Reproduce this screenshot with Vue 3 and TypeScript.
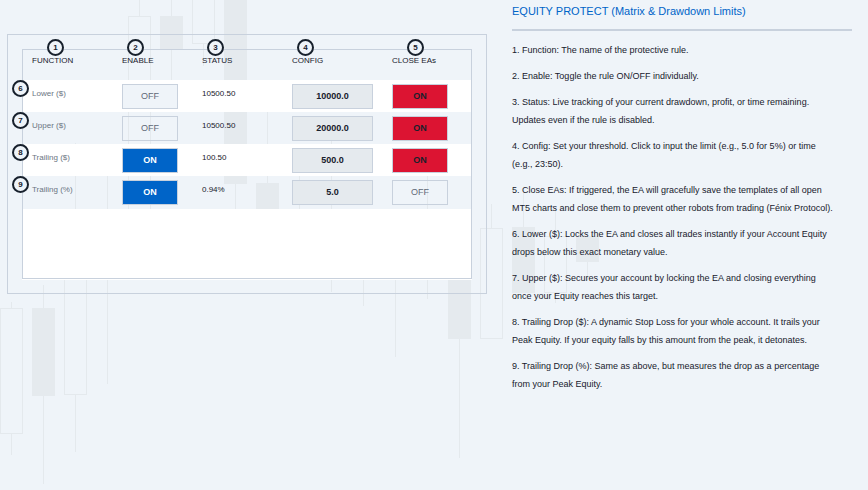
<script setup lang="ts">
import { reactive } from 'vue'

interface Column {
  label: string
  markerInset: 'near' | 'far'
}

interface Rule {
  marker: number
  name: string
  enabled: boolean
  status: string
  config: string
  closeEas: boolean
}

interface Candle {
  x: number
  high: number
  top: number
  bottom: number
  low: number
  filled?: boolean
}

const columns: Column[] = [
  { label: 'FUNCTION', markerInset: 'far' },
  { label: 'ENABLE', markerInset: 'near' },
  { label: 'STATUS', markerInset: 'near' },
  { label: 'CONFIG', markerInset: 'near' },
  { label: 'CLOSE EAs', markerInset: 'far' },
]

const rules = reactive<Rule[]>([
  { marker: 6, name: 'Lower ($)', enabled: false, status: '10500.50', config: '10000.0', closeEas: true },
  { marker: 7, name: 'Upper ($)', enabled: false, status: '10500.50', config: '20000.0', closeEas: true },
  { marker: 8, name: 'Trailing ($)', enabled: true, status: '100.50', config: '500.0', closeEas: true },
  { marker: 9, name: 'Trailing (%)', enabled: true, status: '0.94%', config: '5.0', closeEas: false },
])

const notes = [
  '1. Function: The name of the protective rule.',
  '2. Enable: Toggle the rule ON/OFF individually.',
  '3. Status: Live tracking of your current drawdown, profit, or time remaining. Updates even if the rule is disabled.',
  '4. Config: Set your threshold. Click to input the limit (e.g., 5.0 for 5%) or time (e.g., 23:50).',
  '5. Close EAs: If triggered, the EA will gracefully save the templates of all open MT5 charts and close them to prevent other robots from trading (Fénix Protocol).',
  '6. Lower ($): Locks the EA and closes all trades instantly if your Account Equity drops below this exact monetary value.',
  '7. Upper ($): Secures your account by locking the EA and closing everything once your Equity reaches this target.',
  '8. Trailing Drop ($): A dynamic Stop Loss for your whole account. It trails your Peak Equity. If your equity falls by this amount from the peak, it detonates.',
  '9. Trailing Drop (%): Same as above, but measures the drop as a percentage from your Peak Equity.',
]

const candles: Candle[] = [
  { x: 0, high: 302, top: 308, bottom: 434, low: 455 },
  { x: 32, high: 285, top: 308, bottom: 396, low: 484, filled: true },
  { x: 64, high: 143, top: 215, bottom: 395, low: 452 },
  { x: 96, high: 176, top: 210, bottom: 270, low: 384 },
  { x: 128, high: 0, top: 16, bottom: 240, low: 250 },
  { x: 160, high: 0, top: 16, bottom: 49, low: 85, filled: true },
  { x: 192, high: -10, top: -5, bottom: 44, low: 66 },
  { x: 224, high: -10, top: -5, bottom: 184, low: 240, filled: true },
  { x: 256, high: 112, top: 183, bottom: 240, low: 260, filled: true },
  { x: 288, high: 176, top: 210, bottom: 250, low: 252 },
  { x: 320, high: 116, top: 220, bottom: 260, low: 292 },
  { x: 352, high: 215, top: 220, bottom: 260, low: 306 },
  { x: 384, high: 215, top: 220, bottom: 260, low: 357 },
  { x: 416, high: 170, top: 215, bottom: 260, low: 299 },
  { x: 448, high: 215, top: 220, bottom: 339, low: 458, filled: true },
  { x: 480, high: 204, top: 228, bottom: 339, low: 339 },
  { x: 512, high: 190, top: 227, bottom: 293, low: 293, filled: true },
  { x: 544, high: 208, top: 236, bottom: 293, low: 303 },
  { x: 576, high: 236, top: 236, bottom: 262, low: 280, filled: true },
]
</script>

<template>
  <main class="page">
    <svg class="candles" aria-hidden="true">
      <g v-for="c in candles" :key="c.x">
        <path :d="`M${c.x + 11.5} ${c.high}V${c.top}M${c.x + 11.5} ${c.bottom}V${c.low}`" class="line" />
        <rect v-if="c.filled" :x="c.x" :y="c.top" width="23" :height="c.bottom - c.top" class="solid" />
        <rect v-else :x="c.x + 0.5" :y="c.top + 0.5" width="22" :height="c.bottom - c.top - 1" class="line" />
      </g>
    </svg>

    <section class="panel">
      <div class="matrix">
        <table>
          <colgroup>
            <col class="c-function" />
            <col class="c-enable" />
            <col class="c-status" />
            <col class="c-config" />
            <col />
          </colgroup>
          <thead>
            <tr>
              <th v-for="(col, i) in columns" :key="col.label" scope="col">
                <span class="marker head" :class="col.markerInset">{{ i + 1 }}</span>{{ col.label }}
              </th>
            </tr>
          </thead>
          <tbody>
            <tr v-for="r in rules" :key="r.marker">
              <td class="name"><span class="marker side">{{ r.marker }}</span>{{ r.name }}</td>
              <td class="control">
                <button
                  type="button"
                  class="toggle"
                  :class="{ blue: r.enabled }"
                  :aria-label="`Enable ${r.name}`"
                  :aria-pressed="r.enabled"
                  @click="r.enabled = !r.enabled"
                >{{ r.enabled ? 'ON' : 'OFF' }}</button>
              </td>
              <td class="status">{{ r.status }}</td>
              <td class="control">
                <input v-model="r.config" class="config" type="text" :aria-label="`Config ${r.name}`" />
              </td>
              <td class="control">
                <button
                  type="button"
                  class="toggle"
                  :class="{ red: r.closeEas }"
                  :aria-label="`Close EAs ${r.name}`"
                  :aria-pressed="r.closeEas"
                  @click="r.closeEas = !r.closeEas"
                >{{ r.closeEas ? 'ON' : 'OFF' }}</button>
              </td>
            </tr>
          </tbody>
        </table>
        <div class="blank"></div>
      </div>
    </section>

    <section class="notes">
      <h1>EQUITY PROTECT (Matrix &amp; Drawdown Limits)</h1>
      <p v-for="n in notes" :key="n">{{ n }}</p>
    </section>
  </main>
</template>

<style>
body {
  background: #eff4f9;
}
</style>

<style scoped>
.page {
  position: relative;
  box-sizing: border-box;
  min-height: 100vh;
  display: grid;
  grid-template-columns: 24fr 17fr;
  gap: 25px;
  align-items: start;
  padding: 0 16px 0 7px;
  overflow: hidden;
  background: #eff4f9;
  color: #17202c;
  font-family: "Liberation Sans", Arial, sans-serif;
}

.candles {
  position: absolute;
  inset: 0;
  width: 100%;
  height: 100%;
}

.line {
  fill: none;
  stroke: #e4e9ed;
}

.solid {
  fill: #e5eaee;
}

.panel {
  position: relative;
  margin-top: 34px;
  padding: 14px;
  border: 1px solid #c8d1dd;
}

.matrix {
  border: 1px solid #c8d1dd;
  box-shadow: 0 1px 0 #fff;
}

table {
  width: 100%;
  table-layout: fixed;
  border-collapse: collapse;
}

.c-function,
.c-status {
  width: 90px;
}

.c-enable {
  width: 80px;
}

.c-config {
  width: 100px;
}

th,
td {
  position: relative;
  box-sizing: border-box;
  height: 32px;
  padding: 0 0 0 9px;
  text-align: left;
  vertical-align: top;
  font-size: 8px;
  line-height: 10px;
}

th {
  height: 30px;
  padding-top: 6px;
  font-weight: 400;
}

tbody tr:nth-child(odd) {
  background: #fff;
}

tbody tr:last-child td {
  height: 33px;
}

.name,
.status {
  padding-top: 9px;
}

.name {
  color: #6b7582;
}

.control {
  padding-top: 4px;
}

.marker {
  position: absolute;
  box-sizing: border-box;
  width: 17px;
  height: 17px;
  border: 2px solid #17202c;
  border-radius: 50%;
  background: #eff4f9;
  color: #17202c;
  font-size: 8px;
  font-weight: 700;
  line-height: 13px;
  text-align: center;
}

.marker.head {
  top: -11px;
}

.marker.near {
  left: 14px;
}

.marker.far {
  left: 24px;
}

.marker.side {
  top: 0;
  left: -11px;
}

.toggle,
.config {
  display: block;
  box-sizing: border-box;
  height: 25px;
  margin: 0;
  padding: 0 0 2px;
  border: 1px solid #c8d1dd;
  border-radius: 0;
  font-family: inherit;
  font-size: 9px;
  line-height: 12px;
  text-align: center;
}

.toggle {
  width: 56px;
  background: #eff4f9;
  color: #5f6977;
}

tr:nth-child(even) .toggle:not(.blue, .red) {
  background: transparent;
}

.toggle.blue {
  background: #0064c8;
  color: #fff;
  font-weight: 700;
}

.toggle.red {
  background: #dc1432;
  color: #17202c;
  font-weight: 700;
}

.config {
  width: 81px;
  background: #e5eaee;
  color: #17202c;
  font-weight: 700;
}

.blank {
  height: 69px;
  background: #fff;
}

.notes {
  position: relative;
}

h1 {
  margin: 0 0 10px;
  padding: 4px 0 10px;
  border-bottom: 2px solid #c8d1dd;
  color: #0064c8;
  font-size: 11px;
  font-weight: 400;
  line-height: 15px;
}

p {
  max-width: 36em;
  margin: 0 0 8px;
  font-size: 9px;
  line-height: 18px;
}
</style>
